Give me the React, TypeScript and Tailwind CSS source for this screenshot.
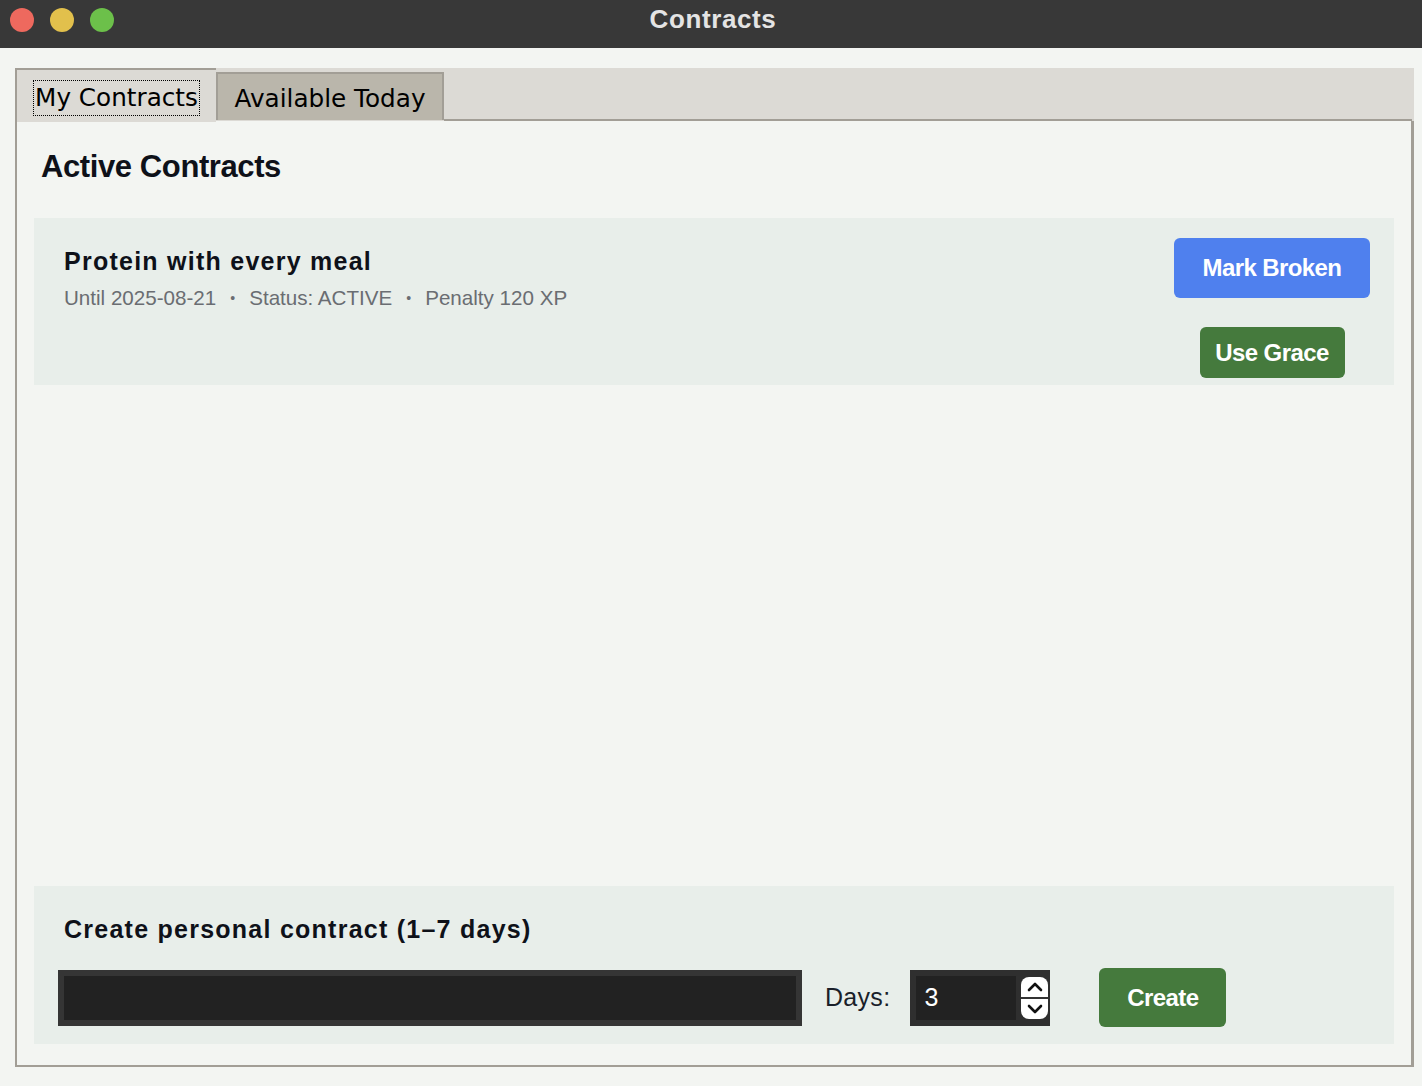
import React from "react";

const sans = { fontFamily: '"Liberation Sans", Arial, sans-serif' };
const tabFont = { fontFamily: '"DejaVu Sans", Verdana, sans-serif' };

function TitleBar() {
  return (
    <div className="relative flex h-[48px] items-start bg-[#383838]">
      <div className="flex items-center gap-[16px] pl-[10px] pt-[8px]">
        <span className="h-[24px] w-[24px] rounded-full bg-[#ee695e]" />
        <span className="h-[24px] w-[24px] rounded-full bg-[#e2c04c]" />
        <span className="h-[24px] w-[24px] rounded-full bg-[#6cc04a]" />
      </div>
      <div
        className="absolute inset-x-0 top-0 flex h-[38px] items-center justify-center pl-[4px] text-[26px] font-bold tracking-[0.6px] text-[#e4e4e4]"
        style={sans}
      >
        Contracts
      </div>
    </div>
  );
}

function Tabs() {
  return (
    <div className="flex h-[53px] items-end bg-[#dcdad5] pr-[2px]">
      <div className="flex h-[54px] w-[201px] items-start justify-center self-start border-l-2 border-t-2 border-[#a29e96] bg-[#dcdad5] pt-[10px]">
        <span
          className="border border-dotted border-black px-[1px] text-[24.7px] leading-[34px] text-black"
          style={tabFont}
        >
          My Contracts
        </span>
      </div>
      <div className="mb-[1px] flex h-[48px] w-[228px] items-center justify-center border-2 border-b-0 border-[#a29e96] bg-[#bab6ab] pt-[4px]">
        <span className="text-[24.7px] leading-[34px] text-black" style={tabFont}>
          Available Today
        </span>
      </div>
      <div className="h-[2px] flex-1 bg-[#a29e96]" />
    </div>
  );
}

function PrimaryButton({ children, color }: { children: React.ReactNode; color: string }) {
  return (
    <button
      className={`${color} flex h-full w-full items-center justify-center rounded-[6px] text-[24px] font-bold tracking-[-0.6px] text-white`}
      style={sans}
    >
      {children}
    </button>
  );
}

function ContractCard() {
  return (
    <div className="flex h-[167px] bg-[#e8eeea] pl-[30px] pr-[24px] pt-[20px]">
      <div className="flex-1 pt-[8px]">
        <div className="text-[25px] font-bold leading-[30px] tracking-[1.25px] text-[#0e1119]" style={sans}>
          Protein with every meal
        </div>
        <div className="mt-[10px] flex items-center text-[20.6px] leading-[24px] text-[#6a6d72]" style={sans}>
          <span>Until 2025-08-21</span>
          <span className="mx-[14px] text-[14px]">•</span>
          <span>Status: ACTIVE</span>
          <span className="mx-[14px] text-[14px]">•</span>
          <span>Penalty 120 XP</span>
        </div>
      </div>
      <div className="flex flex-col items-center">
        <div className="h-[60px] w-[196px]">
          <PrimaryButton color="bg-[#4f80ee]">Mark Broken</PrimaryButton>
        </div>
        <div className="mt-[29px] h-[51px] w-[145px]">
          <PrimaryButton color="bg-[#457a3d]">Use Grace</PrimaryButton>
        </div>
      </div>
    </div>
  );
}

function Spinner() {
  return (
    <div className="flex h-[42px] w-[27px] flex-col overflow-hidden rounded-[8px] bg-white">
      <div className="flex flex-1 items-center justify-center border-b-2 border-[#333]">
        <svg width="18" height="12" viewBox="0 0 18 12" fill="none">
          <path d="M3 9 L9 3 L15 9" stroke="#111" strokeWidth="2.6" strokeLinecap="round" strokeLinejoin="round" />
        </svg>
      </div>
      <div className="flex flex-1 items-center justify-center">
        <svg width="18" height="12" viewBox="0 0 18 12" fill="none">
          <path d="M3 3 L9 9 L15 3" stroke="#111" strokeWidth="2.6" strokeLinecap="round" strokeLinejoin="round" />
        </svg>
      </div>
    </div>
  );
}

function CreateCard() {
  return (
    <div className="h-[158px] bg-[#e8eeea] pl-[24px] pt-[28px]">
      <div className="pl-[6px] text-[25px] font-bold leading-[30px] tracking-[1.25px] text-[#0e1119]" style={sans}>
        Create personal contract (1–7 days)
      </div>
      <div className="mt-[24px] flex items-center">
        <div className="h-[56px] w-[744px] border-[6px] border-[#353535] bg-[#222222]" />
        <span className="ml-[23px] text-[25px] tracking-[0.3px] text-[#1a1f2a]" style={sans}>
          Days:
        </span>
        <div className="ml-[20px] flex h-[56px] w-[140px] items-center bg-[#2f2f2f] pl-[6px] pr-[2px]">
          <div className="flex h-[44px] w-[100px] items-center bg-[#222222] pl-[8px] text-[25px] text-white" style={sans}>
            3
          </div>
          <div className="ml-[5px]">
            <Spinner />
          </div>
        </div>
        <div className="ml-[49px] h-[59px] w-[127px]">
          <PrimaryButton color="bg-[#457a3d]">Create</PrimaryButton>
        </div>
      </div>
    </div>
  );
}

export default function App() {
  return (
    <div className="h-[1086px] w-[1422px] overflow-hidden bg-[#f3f5f2]">
      <TitleBar />
      <div className="pl-[15px] pr-[8px] pt-[20px]">
        <Tabs />
        <div className="flex h-[946px] flex-col border-b-2 border-l-2 border-r-[3px] border-[#a29e96] bg-[#f3f5f2] px-[17px] pb-[21px]">
          <div
            className="pl-[7px] pt-[28px] text-[31px] font-bold leading-[36px] tracking-[-0.4px] text-[#0e1119]"
            style={sans}
          >
            Active Contracts
          </div>
          <div className="mt-[33px]">
            <ContractCard />
          </div>
          <div className="flex-1" />
          <CreateCard />
        </div>
      </div>
    </div>
  );
}
